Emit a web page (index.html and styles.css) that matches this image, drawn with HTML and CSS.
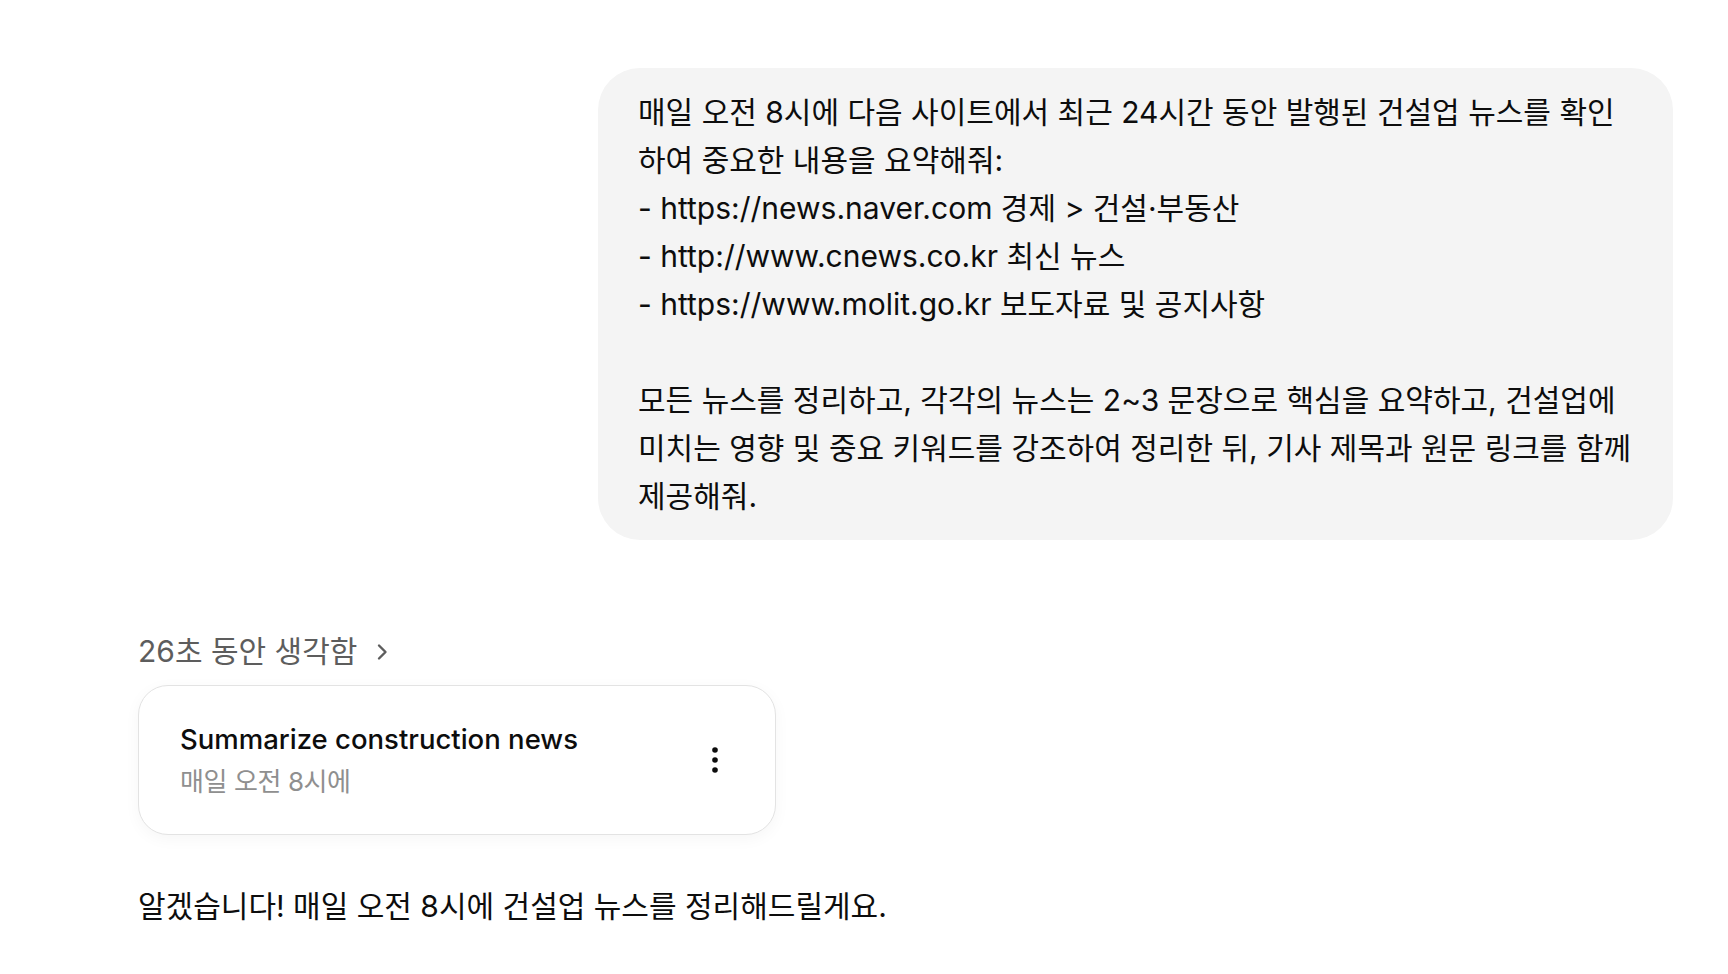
FILE: index.html
```html
<!DOCTYPE html>
<html lang="ko">
<head>
    <meta charset="UTF-8">
    <meta name="viewport" content="width=device-width, initial-scale=1.0">
    <title>건설업 뉴스 요약</title>
    <link rel="stylesheet" href="styles.css">
</head>
<body>
    <div class="chat">
        <div class="user-row">
            <div class="user-bubble">매일 오전 8시에 다음 사이트에서 최근 24시간 동안 발행된 건설업 뉴스를 확인하여 중요한 내용을 요약해줘:
- https://news.naver.com 경제 &gt; 건설·부동산
- http://www.cnews.co.kr 최신 뉴스
- https://www.molit.go.kr 보도자료 및 공지사항

모든 뉴스를 정리하고, 각각의 뉴스는 2~3 문장으로 핵심을 요약하고, 건설업에 미치는 영향 및 중요 키워드를 강조하여 정리한 뒤, 기사 제목과 원문 링크를 함께 제공해줘.</div>
        </div>

        <div class="assistant">
            <button class="thinking">
                <span>26초 동안 생각함</span>
                <svg class="chevron" width="14" height="22" viewBox="0 0 14 22">
                    <path d="M4 4.5 L10.5 11 L4 17.5" fill="none" stroke="#5d5d5d" stroke-width="2.4" stroke-linecap="round" stroke-linejoin="round"/>
                </svg>
            </button>

            <div class="task-card">
                <div class="task-info">
                    <div class="task-title">Summarize construction news</div>
                    <div class="task-time">매일 오전 8시에</div>
                </div>
                <svg class="task-menu" width="10" height="28" viewBox="0 0 10 28">
                    <circle cx="5" cy="4" r="2.8" fill="#0d0d0d"/>
                    <circle cx="5" cy="14" r="2.8" fill="#0d0d0d"/>
                    <circle cx="5" cy="24" r="2.8" fill="#0d0d0d"/>
                </svg>
            </div>

            <p class="reply">알겠습니다! 매일 오전 8시에 건설업 뉴스를 정리해드릴게요.</p>
        </div>
    </div>
</body>
</html>
```

FILE: styles.css
```css
* {
    margin: 0;
    padding: 0;
    box-sizing: border-box;
}

body {
    background: #ffffff;
    color: #0d0d0d;
    font-family: Inter, "Noto Sans CJK KR", sans-serif;
}

.chat {
    padding: 68px 55px 0 138px;
}

.user-row {
    display: flex;
    justify-content: flex-end;
}

.user-bubble {
    max-width: 1075px;
    background: #f4f4f4;
    border-radius: 42px;
    padding: 20px 38px 20px 40px;
    font-size: 30px;
    line-height: 48px;
    white-space: pre-wrap;
}

.assistant {
    margin-top: 91px;
}

.thinking {
    display: flex;
    align-items: center;
    gap: 18px;
    background: none;
    border: none;
    font-family: inherit;
    font-size: 30px;
    line-height: 40px;
    color: #5d5d5d;
    cursor: pointer;
}

.chevron {
    margin-top: 2px;
}

.task-card {
    display: flex;
    align-items: center;
    justify-content: space-between;
    width: 638px;
    height: 150px;
    margin-top: 14px;
    padding: 0 55px 0 41px;
    border: 1px solid #e3e3e3;
    border-radius: 30px;
    background: #ffffff;
    box-shadow: 0 4px 16px rgba(0, 0, 0, 0.04);
}

.task-title {
    font-size: 27.5px;
    font-weight: 500;
    line-height: 36px;
}

.task-time {
    margin-top: 7px;
    font-size: 26px;
    line-height: 36px;
    color: #8f8f8f;
    letter-spacing: -0.4px;
}

.reply {
    margin-top: 47px;
    font-size: 30px;
    line-height: 48px;
}
```
